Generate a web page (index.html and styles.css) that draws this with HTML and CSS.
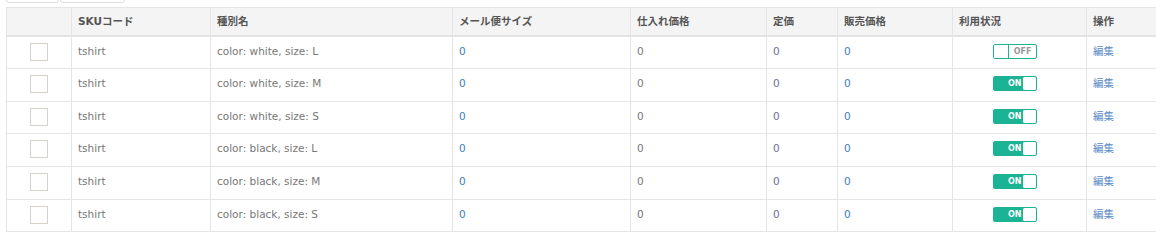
FILE: index.html
```html
<!DOCTYPE html>
<html lang="ja">
<head>
<meta charset="utf-8">
<link rel="stylesheet" href="styles.css">
</head>
<body>
<div class="toolbar">
  <span class="tbtn tbtn-a"></span><span class="tbtn tbtn-b"></span>
</div>
<table class="grid">
  <colgroup>
    <col class="c-chk"><col class="c-sku"><col class="c-type"><col class="c-mail"><col class="c-cost"><col class="c-list"><col class="c-sale"><col class="c-use"><col class="c-op">
  </colgroup>
  <thead>
    <tr>
      <th></th><th>SKUコード</th><th>種別名</th><th>メール便サイズ</th><th>仕入れ価格</th><th>定価</th><th>販売価格</th><th>利用状況</th><th>操作</th>
    </tr>
  </thead>
  <tbody>
    <tr>
      <td class="chk"><span class="box"></span></td><td>tshirt</td><td>color: white, size: L</td><td class="link">0</td><td>0</td><td class="muted">0</td><td class="link">0</td>
      <td class="use"><span class="sw off"><span class="knob"></span><span class="lbl">OFF</span></span></td><td><a class="edit">編集</a></td>
    </tr>
    <tr>
      <td class="chk"><span class="box"></span></td><td>tshirt</td><td>color: white, size: M</td><td class="link">0</td><td>0</td><td class="muted">0</td><td class="link">0</td>
      <td class="use"><span class="sw on"><span class="lbl">ON</span><span class="knob"></span></span></td><td><a class="edit">編集</a></td>
    </tr>
    <tr>
      <td class="chk"><span class="box"></span></td><td>tshirt</td><td>color: white, size: S</td><td class="link">0</td><td>0</td><td class="muted">0</td><td class="link">0</td>
      <td class="use"><span class="sw on"><span class="lbl">ON</span><span class="knob"></span></span></td><td><a class="edit">編集</a></td>
    </tr>
    <tr>
      <td class="chk"><span class="box"></span></td><td>tshirt</td><td>color: black, size: L</td><td class="link">0</td><td>0</td><td class="muted">0</td><td class="link">0</td>
      <td class="use"><span class="sw on"><span class="lbl">ON</span><span class="knob"></span></span></td><td><a class="edit">編集</a></td>
    </tr>
    <tr>
      <td class="chk"><span class="box"></span></td><td>tshirt</td><td>color: black, size: M</td><td class="link">0</td><td>0</td><td class="muted">0</td><td class="link">0</td>
      <td class="use"><span class="sw on"><span class="lbl">ON</span><span class="knob"></span></span></td><td><a class="edit">編集</a></td>
    </tr>
    <tr>
      <td class="chk"><span class="box"></span></td><td>tshirt</td><td>color: black, size: S</td><td class="link">0</td><td>0</td><td class="muted">0</td><td class="link">0</td>
      <td class="use"><span class="sw on"><span class="lbl">ON</span><span class="knob"></span></span></td><td><a class="edit">編集</a></td>
    </tr>
  </tbody>
</table>
</body>
</html>
```
FILE: styles.css
```css
html, body {
  margin: 0;
  padding: 0;
  background: #fff;
}
body {
  padding-left: 6px;
  font-family: "DejaVu Sans", "Noto Sans CJK JP", sans-serif;
  font-size: 10.5px;
  color: #777;
  overflow: hidden;
}
.toolbar {
  display: flex;
  gap: 1px;
  height: 20px;
  margin-top: -18px;
}
.tbtn {
  display: block;
  height: 19px;
  border: 1px solid #ddd;
  border-radius: 0 0 3px 3px;
  background: #fff;
}
.tbtn-a { width: 51px; }
.tbtn-b { width: 63px; }
.grid {
  margin-top: 5px;
  width: 1151px;
  border-collapse: collapse;
  table-layout: fixed;
}
.c-chk { width: 65px; }
.c-sku { width: 139px; }
.c-type { width: 242px; }
.c-mail { width: 178px; }
.c-cost { width: 136px; }
.c-list { width: 71px; }
.c-sale { width: 115px; }
.c-use { width: 134px; }
.c-op { width: 71px; }
.grid th, .grid td {
  border: 1px solid #e5e5e5;
  text-align: left;
  vertical-align: top;
  padding: 0 6px;
  white-space: nowrap;
}
.grid th {
  background: #f4f4f4;
  color: #555;
  font-weight: bold;
  height: 27px;
  line-height: 26px;
  border-bottom: 2px solid #e3e3e3;
}
.grid td {
  height: 31.67px;
  padding-top: 7px;
  line-height: 14px;
  box-sizing: border-box;
}
.grid tbody tr { height: 32.67px; }
.grid td.chk {
  text-align: center;
  padding-top: 6px;
}
.box {
  display: inline-block;
  width: 16px;
  height: 16px;
  border: 1px solid #d6d2cb;
  background: #fff;
}
.link { color: #3f7cc0; }
.muted { color: #6e6e96; }
.edit {
  color: #5a8cc6;
  cursor: pointer;
}
.grid td.use {
  padding-left: 40px;
  padding-top: 7px;
}
.sw {
  display: flex;
  width: 44px;
  height: 15px;
  box-sizing: border-box;
  border: 1px solid #1ab394;
  border-radius: 2px;
  overflow: hidden;
  font-size: 8px;
  font-weight: bold;
  line-height: 13px;
}
.sw .knob {
  flex: 0 0 14px;
  background: #fff;
}
.sw.off .knob { border-right: 1px solid #1ab394; }
.sw.off { background: #fff; }
.sw.off .lbl {
  flex: 1;
  text-align: center;
  color: #999;
}
.sw.on { background: #1ab394; }
.sw.on .knob {
  border-left: 1px solid #1ab394;
  border-radius: 2px;
}
.sw.on .lbl {
  flex: 1;
  color: #fff;
  padding-left: 14px;
  white-space: nowrap;
}
```
